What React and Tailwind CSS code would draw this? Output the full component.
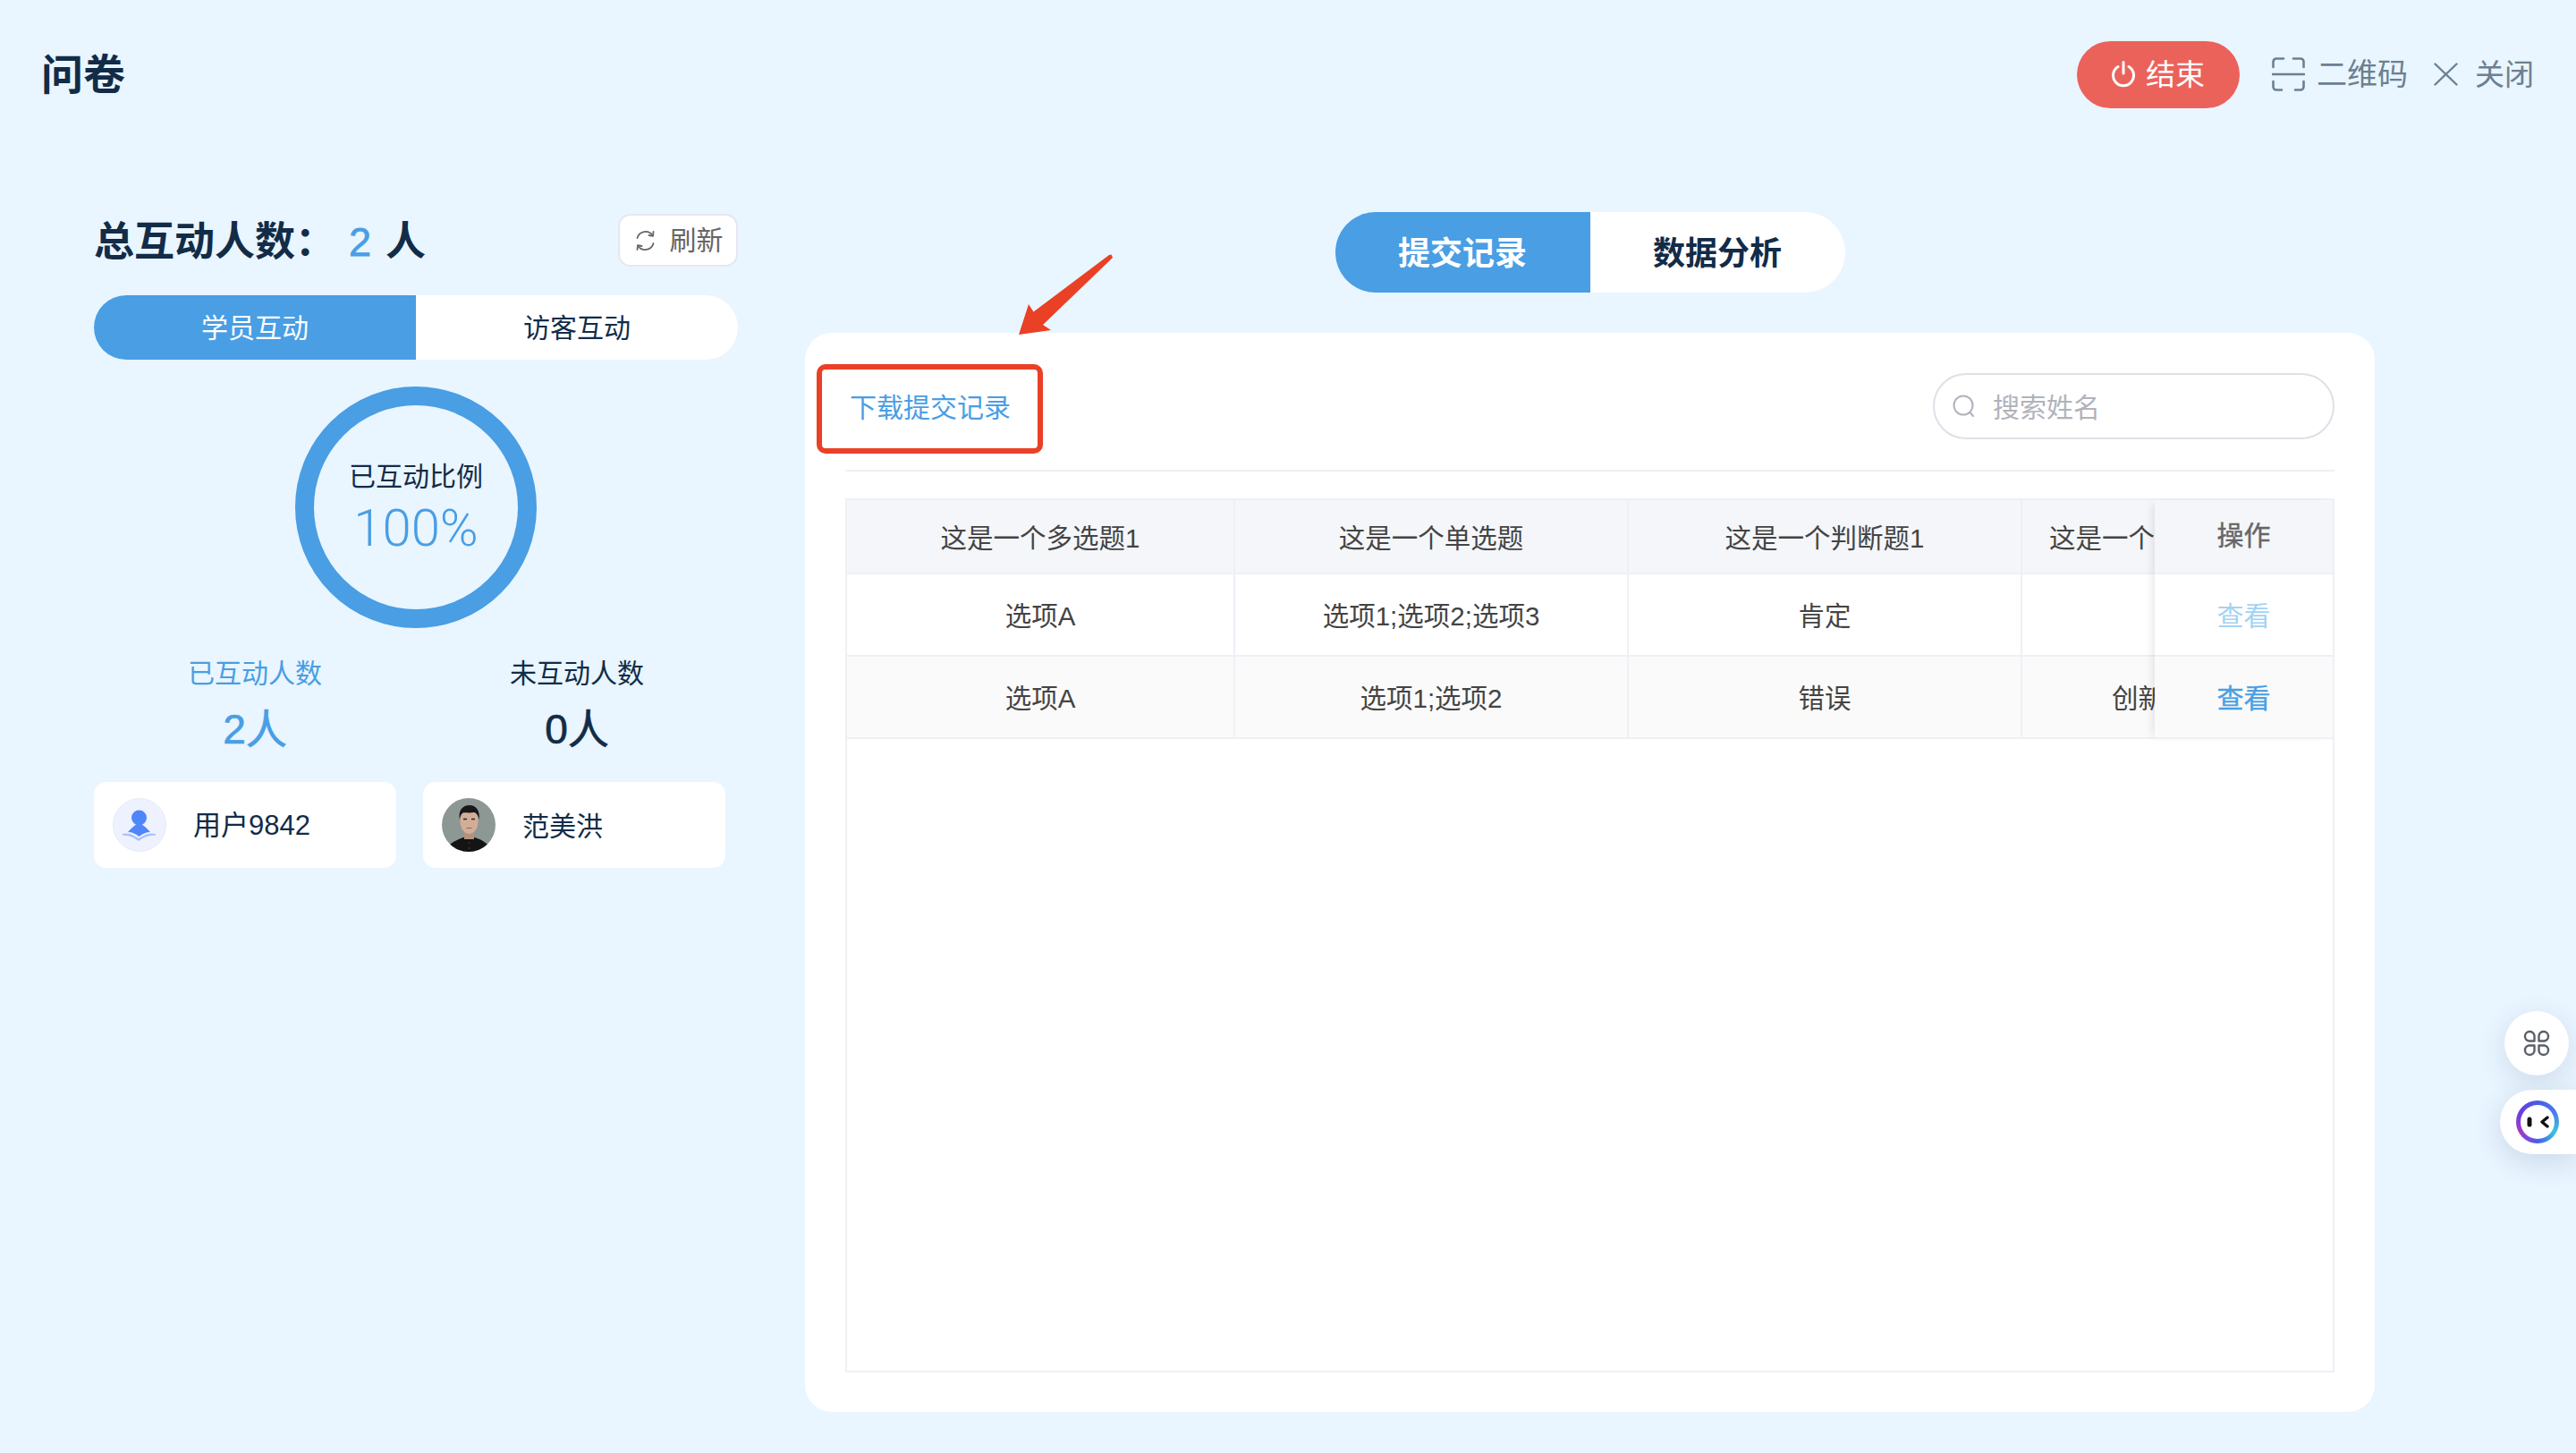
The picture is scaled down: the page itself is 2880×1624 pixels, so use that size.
import React from "react";

function Cell({ children, className = "" }) {
  return <div className={`flex items-center justify-center border-r-2 border-[#eef0f6] overflow-hidden whitespace-nowrap ${className}`}>{children}</div>;
}

function Row({ cells, className = "", pad = "" }) {
  return (
    <div className={`grid grid-cols-[434px_440px_440px_1fr] border-b-2 border-[#eef0f6] text-[29.5px] text-[#444444] ${className}`}>
      {cells.map((c, i) =>
        i < 3 ? (
          <Cell key={i} className={pad}>{c}</Cell>
        ) : (
          <div key={i} className={`flex items-center overflow-hidden whitespace-nowrap ${pad} ${c.pad}`}>{c.text}</div>
        )
      )}
    </div>
  );
}

function PowerIcon() {
  return (
    <svg width="26" height="30" viewBox="0 0 26 30" fill="none" stroke="#fff" strokeWidth="3" strokeLinecap="round">
      <path d="M7 6.5 A11.5 11.5 0 1 0 19 6.5" />
      <path d="M13 1.5 V14" />
    </svg>
  );
}

function QrIcon() {
  return (
    <svg width="37" height="38" viewBox="0 0 37 38" fill="none" stroke="#6b8092" strokeWidth="2.6" strokeLinecap="round">
      <path d="M13 1.5 H5 A3.5 3.5 0 0 0 1.5 5 V11" />
      <path d="M24 1.5 H32 A3.5 3.5 0 0 1 35.5 5 V11" />
      <path d="M1.5 27 V33 A3.5 3.5 0 0 0 5 36.5 H11" />
      <path d="M35.5 27 V33 A3.5 3.5 0 0 1 32 36.5 H26" />
      <path d="M1 19 H36" />
    </svg>
  );
}

function CloseIcon() {
  return (
    <svg width="27" height="26" viewBox="0 0 27 26" fill="none" stroke="#6b8092" strokeWidth="2.4" strokeLinecap="round">
      <path d="M1.5 1.5 L25.5 24.5" />
      <path d="M25.5 1.5 L1.5 24.5" />
    </svg>
  );
}

function RefreshIcon() {
  return (
    <svg width="23" height="24" viewBox="0 0 23 24" fill="none" stroke="#666666" strokeWidth="1.8" strokeLinecap="round" strokeLinejoin="round">
      <path d="M2.5 9 A9.5 9.5 0 0 1 19.5 6" />
      <path d="M20.5 15 A9.5 9.5 0 0 1 3.5 18" />
      <path d="M20.5 2 L20 6.8 L15.5 6" />
      <path d="M2.5 22 L3 17.2 L7.5 18" />
    </svg>
  );
}

function SearchIcon() {
  return (
    <svg width="26" height="28" viewBox="0 0 26 28" fill="none" stroke="#b0b3bb" strokeWidth="2" strokeLinecap="round">
      <circle cx="12" cy="13" r="10.5" />
      <path d="M19.5 21 L23 25" />
    </svg>
  );
}

function UserAvatar() {
  return (
    <svg width="60" height="60" viewBox="0 0 60 60" className="shrink-0">
      <circle cx="30" cy="30" r="29.5" fill="#eef2fe" stroke="#e6eaf6" />
      <path d="M11 40 C18 38 24 42 29 45 C34 42 41 38 48 40 L48 42 C42 41 36 43 29 48 C22 43 16 41 11 42 Z" fill="#a8c2fb" />
      <circle cx="29.5" cy="22" r="8.5" fill="#4f86fb" />
      <path d="M29.5 28 C24 30 21 34 17 38 C22 38 26 40 29.5 43 C33 40 37 38 42 38 C38 34 35 30 29.5 28 Z" fill="#4f86fb" />
    </svg>
  );
}

function PhotoAvatar() {
  return (
    <svg width="60" height="60" viewBox="0 0 60 60" className="shrink-0">
      <defs>
        <clipPath id="avatar-clip">
          <circle cx="30" cy="30" r="30" />
        </clipPath>
      </defs>
      <g clipPath="url(#avatar-clip)">
        <rect width="60" height="60" fill="#8d9895" />
        <path d="M4 60 C8 50 16 47 24 44 H37 C45 47 52 50 56 60 Z" fill="#141414" />
        <rect x="25" y="36" width="11" height="10" fill="#b4917c" />
        <ellipse cx="30.5" cy="26" rx="10" ry="14" fill="#d2ae98" />
        <path d="M20 24 C18 14 23 8 31 8 C39 8 43 15 41.5 24 C41 20 39 16.5 36 16 C31 17 26 16 23.5 16.5 C21.5 18 20.5 20 20 24 Z" fill="#181818" />
        <path d="M24 23.5 H28 M33 23.5 H37" stroke="#2d2320" strokeWidth="1.3" />
        <path d="M27.5 33.5 H33.5" stroke="#97655a" strokeWidth="1" />
        <circle cx="30.5" cy="50" r="0.8" fill="#555" />
        <circle cx="30.5" cy="56" r="0.8" fill="#555" />
      </g>
    </svg>
  );
}

function LeafIcon() {
  return (
    <svg width="30" height="30" viewBox="0 0 30 30" fill="none" stroke="#5b5f69" strokeWidth="2.4" strokeLinejoin="round">
      <path d="M12.5 12.5 H6.5 A5.3 5.3 0 1 1 12.5 6.5 Z" />
      <path d="M17.5 12.5 H23.5 A5.3 5.3 0 1 0 17.5 6.5 Z" />
      <path d="M12.5 17.5 H6.5 A5.3 5.3 0 1 0 12.5 23.5 Z" />
      <path d="M17.5 17.5 H23.5 A5.3 5.3 0 1 1 17.5 23.5 Z" />
    </svg>
  );
}

export default function App() {
  return (
    <div className="relative w-[2880px] h-[1624px] overflow-hidden bg-[#e9f5ff] text-[#122c48] [font-family:'Liberation_Sans','Noto_Sans_CJK_SC',sans-serif]">
      {/* header */}
      <header className="flex h-[166px] items-center justify-between pl-[46px] pr-[47px]">
        <h1 className="text-[47px] font-bold leading-none">问卷</h1>
        <div className="flex items-center">
          <button className="flex h-[75px] w-[182px] items-center justify-center gap-[12px] rounded-full bg-[#eb625b] text-[33px] leading-none text-white">
            <PowerIcon />
            <span>结束</span>
          </button>
          <div className="ml-[36px] flex items-center gap-[13px] text-[34px] leading-none text-[#6b8092]">
            <QrIcon />
            <span>二维码</span>
          </div>
          <div className="ml-[29px] flex items-center gap-[19px] text-[33px] leading-none text-[#6b8092]">
            <CloseIcon />
            <span>关闭</span>
          </div>
        </div>
      </header>

      <main className="mt-[71px] flex items-start pl-[105px]">
        {/* left column */}
        <section className="w-[720px] pt-[2px]">
          <div className="flex h-[59px] items-center justify-between">
            <div className="flex items-center pt-[3px] text-[45px] font-bold leading-none">
              <span>总互动人数：</span>
              <span className="ml-[15px] font-normal text-[#499ee4] [-webkit-text-stroke:0.8px_#499ee4]">2</span>
              <span className="ml-[16px]">人</span>
            </div>
            <button className="flex h-[59px] w-[134px] items-center justify-center gap-[16px] rounded-[14px] border-2 border-[#e4e8ef] bg-white pl-[2px] text-[30px] leading-none text-[#666666]">
              <RefreshIcon />
              <span>刷新</span>
            </button>
          </div>

          <div className="mt-[32px] grid h-[72px] grid-cols-2 overflow-hidden rounded-full bg-white text-[30px]">
            <div className="flex items-center justify-center bg-[#499ee4] text-white">学员互动</div>
            <div className="flex items-center justify-center">访客互动</div>
          </div>

          <div className="mx-auto mt-[30px] flex h-[270px] w-[270px] flex-col items-center rounded-full border-[21px] border-[#499ee4]">
            <div className="mt-[62px] text-[30px] leading-[36px]">已互动比例</div>
            <div className="mt-[9px] text-[58px] font-light leading-[60px] text-[#499ee4] [font-family:Roboto,sans-serif]">100%</div>
          </div>

          <div className="mt-[33px] grid grid-cols-2 text-center">
            <div>
              <div className="text-[30px] leading-[36px] text-[#499ee4]">已互动人数</div>
              <div className="mt-[15px] text-[46px] leading-[58px] text-[#499ee4] [-webkit-text-stroke:0.7px_#499ee4]">2人</div>
            </div>
            <div>
              <div className="text-[30px] leading-[36px]">未互动人数</div>
              <div className="mt-[15px] text-[46px] leading-[58px] [-webkit-text-stroke:0.7px_#122c48]">0人</div>
            </div>
          </div>

          <div className="mt-[30px] flex gap-[30px]">
            <div className="flex h-[96px] w-[338px] items-center gap-[30px] rounded-[14px] bg-white pl-[21px] text-[31px]">
              <UserAvatar />
              <span className="pt-[2px]">用户9842</span>
            </div>
            <div className="flex h-[96px] w-[338px] items-center gap-[30px] rounded-[14px] bg-white pl-[21px] text-[30px]">
              <PhotoAvatar />
              <span className="pt-[2px]">范美洪</span>
            </div>
          </div>
        </section>

        {/* right column */}
        <section className="ml-[75px] flex w-[1755px] flex-col items-center">
          <div className="flex h-[90px] w-[570px] overflow-hidden rounded-full bg-white text-[36px] font-bold leading-none">
            <div className="flex flex-1 items-center justify-center bg-[#499ee4] pt-[3px] text-white">提交记录</div>
            <div className="flex flex-1 items-center justify-center pt-[3px]">数据分析</div>
          </div>

          <div className="relative mt-[45px] flex h-[1206px] w-full flex-col rounded-[30px] bg-white px-[45px] pt-[45px]">
            <div className="flex h-[110px] items-start justify-between border-b-2 border-[#eef0f4]">
              <div className="flex h-[74px] items-center pl-[5px] pt-[3px] text-[30px] leading-none text-[#499ee4]">下载提交记录</div>
              <div className="flex h-[74px] w-[449px] items-center gap-[19px] rounded-full border-2 border-[#dfe0e7] pl-[20px] text-[30px] leading-none text-[#b0b3bb]">
                <SearchIcon />
                <span className="pt-[3px]">搜索姓名</span>
              </div>
            </div>

            <div className="mt-[30px] flex h-[977px] items-start border-2 border-[#eef0f6]">
              <div className="min-w-0 flex-1 overflow-hidden">
                <Row
                  className="h-[83px] bg-[#f4f6f9]"
                  pad="pt-[6px]"
                  cells={["这是一个多选题1", "这是一个单选题", "这是一个判断题1", { text: "这是一个", pad: "pl-[30px]" }]}
                />
                <Row
                  className="h-[92px] bg-white"
                  pad="pt-[4px]"
                  cells={["选项A", "选项1;选项2;选项3", "肯定", { text: "", pad: "" }]}
                />
                <Row
                  className="h-[92px] bg-[#fafafa]"
                  pad="pt-[4px]"
                  cells={["选项A", "选项1;选项2", "错误", { text: "创新", pad: "pl-[100px]" }]}
                />
              </div>
              <div className="z-10 w-[199px] shrink-0 text-center text-[30px] shadow-[-6px_0_10px_-4px_rgba(0,0,0,0.1)]">
                <div className="flex h-[83px] items-center justify-center border-b-2 border-[#eef0f6] bg-[#f4f6f9] pb-[2px] text-[#666666] [-webkit-text-stroke:0.4px_#666666]">操作</div>
                <div className="flex h-[92px] items-center justify-center border-b-2 border-[#eef0f6] bg-white pt-[3px] text-[#a3d2f4]">查看</div>
                <div className="flex h-[92px] items-center justify-center border-b-2 border-[#eef0f6] bg-[#fafafa] pt-[3px] text-[#499ee4] [-webkit-text-stroke:0.4px_#499ee4]">查看</div>
              </div>
            </div>

            {/* red annotation box */}
            <div className="absolute left-[13px] top-[35px] h-[100px] w-[253px] rounded-[10px] border-[6px] border-[#ea4025]" />
          </div>
        </section>
      </main>

      {/* red annotation arrow */}
      <svg className="absolute left-[1130px] top-[280px]" width="120" height="100" viewBox="0 0 120 100">
        <polygon points="9,94 20,60 25.5,68.5 110,5 112.5,4.5 114,8 36,83 45,89" fill="#ea4025" />
      </svg>

      {/* floating widgets */}
      <div className="absolute right-[8px] top-[1130px] flex h-[72px] w-[72px] items-center justify-center rounded-full bg-white shadow-[0_8px_30px_rgba(60,90,130,0.15)]">
        <LeafIcon />
      </div>
      <div className="absolute right-0 top-[1218px] flex h-[72px] w-[85px] items-center rounded-l-full bg-white pl-[18px] shadow-[0_8px_30px_rgba(60,90,130,0.18)]">
        <div className="flex h-[48px] w-[48px] items-center justify-center rounded-full bg-[conic-gradient(#4b5be8,#4a7aec,#38c6dc,#4a5cea,#a43ac8,#6a3ee0,#4b5be8)]">
          <div className="flex h-[38px] w-[38px] items-center justify-center rounded-full bg-white">
            <svg width="26" height="14" viewBox="0 0 26 14">
              <rect x="1.5" y="1.5" width="5" height="11" rx="2.5" fill="#111" />
              <path d="M24 2 L18 7 L24 12" fill="none" stroke="#111" strokeWidth="3.4" strokeLinejoin="round" strokeLinecap="round" />
            </svg>
          </div>
        </div>
      </div>
    </div>
  );
}
